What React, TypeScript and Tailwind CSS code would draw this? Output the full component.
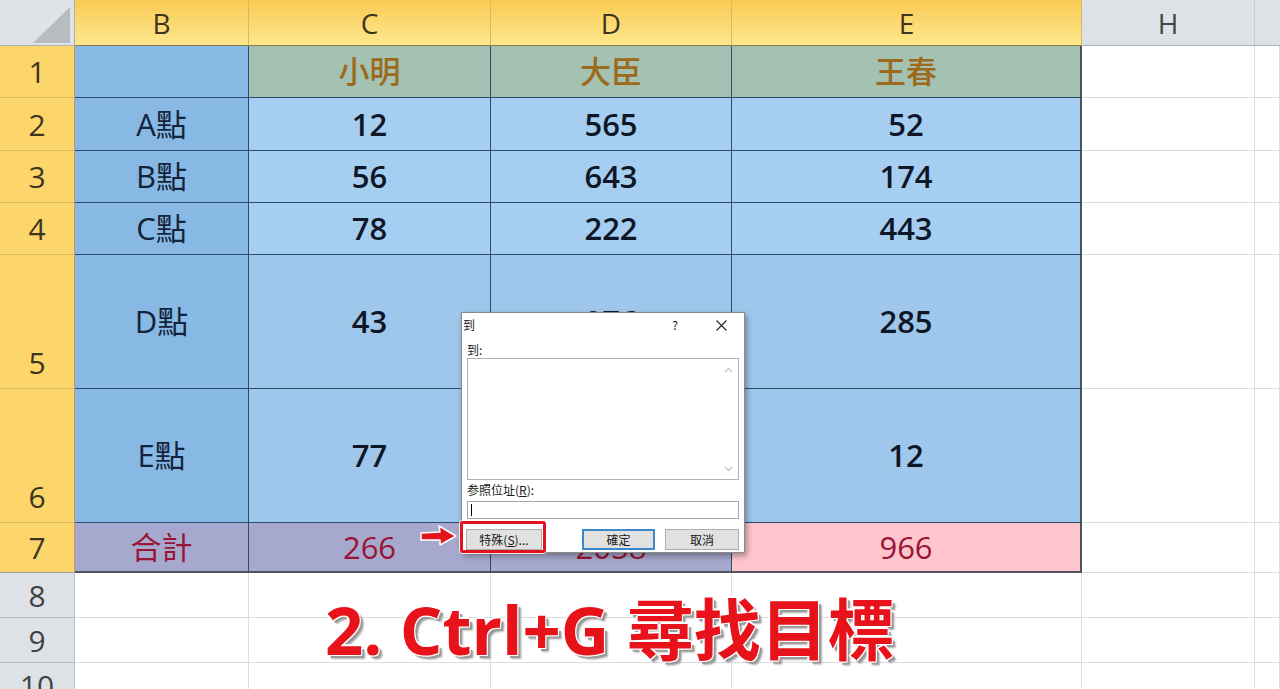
import React from "react";

type Row = { n: string; h: "c" | "b"; cells: string[]; kind: "title" | "light" | "mid" | "total" };

const rows: Row[] = [
  { n: "1", h: "c", cells: ["", "小明", "大臣", "王春"], kind: "title" },
  { n: "2", h: "c", cells: ["A點", "12", "565", "52"], kind: "light" },
  { n: "3", h: "c", cells: ["B點", "56", "643", "174"], kind: "light" },
  { n: "4", h: "c", cells: ["C點", "78", "222", "443"], kind: "light" },
  { n: "5", h: "b", cells: ["D點", "43", "976", "285"], kind: "mid" },
  { n: "6", h: "b", cells: ["E點", "77", "252", "12"], kind: "mid" },
  { n: "7", h: "c", cells: ["合計", "266", "2058", "966"], kind: "total" },
];

function cellClass(kind: Row["kind"], col: number): string {
  const base = "flex items-center justify-center border-b border-r border-[#2b4a6f] text-[31px]";
  let bg = "";
  let color = "text-[#0e1727] font-semibold";
  if (kind === "total") {
    bg = col === 3 ? "bg-[#fec6cc]" : "bg-[#a6a9cd]";
    color = "text-[#9a1436] font-normal";
  } else if (col === 0) {
    bg = "bg-[#87b9e4]";
    color = "text-[#14233a] font-normal";
  } else if (kind === "title") {
    bg = "bg-[#a4c2b1]";
    color = "text-[#9b6a1d] font-medium";
  } else if (kind === "light") {
    bg = "bg-[#a6cef1]";
  } else {
    bg = "bg-[#9fc7eb]";
  }
  let extra = "";
  if (col === 3) extra += " border-r-2 border-r-[#4a545e]";
  if (kind === "total") extra += " border-b-2 border-b-[#50565c]";
  return `${base} ${bg} ${color}${extra}`;
}

const whiteCell = "border-b border-r border-[#dadcde] bg-white";
const grayRowHead =
  "flex items-center justify-center bg-[#dee2e7] border-b border-r border-[#b9bfc6] text-[30px] text-[#3f4245]";

export default function App() {
  return (
    <div className="relative h-[689px] w-[1280px] overflow-hidden bg-white font-['Open_Sans','Noto_Sans_CJK_TC',sans-serif]">
      <div className="grid grid-cols-[75px_174px_242px_241px_350px_173px_1fr] grid-rows-[46px_52px_53px_52px_52px_134px_134px_50px_45px_45px_45px]">
        {/* header row */}
        <div className="relative border-b border-r border-[#a9b0b8] bg-[#dfe3e8]">
          <svg className="absolute left-0 top-0" width="75" height="46" viewBox="0 0 75 46">
            <polygon points="33,43 70,43 70,7" fill="#b7bcc1" />
          </svg>
        </div>
        {["B", "C", "D", "E"].map((c) => (
          <div
            key={c}
            className="flex items-center justify-center border-b border-r border-[#d6b966] border-b-[#8c7a48] bg-linear-to-b from-[#f8cb52] to-[#fee78c] text-[28px] text-[#3d3520]"
          >
            {c}
          </div>
        ))}
        <div className="flex items-center justify-center border-b border-r border-[#c6cbd1] border-b-[#a9b0b8] bg-[#dee2e7] text-[28px] text-[#444749]">
          H
        </div>
        <div className="border-b border-[#a9b0b8] bg-[#dee2e7]" />

        {rows.map((r) => (
          <React.Fragment key={r.n}>
            <div
              className={`flex justify-center border-b border-r border-[#d9b95c] border-r-[#b89e5c] bg-[#fdd66b] text-[30px] text-[#3d3520] ${
                r.h === "b" ? "items-end pb-[3px]" : "items-center"
              } ${r.n === "7" ? "border-b-[#9aa0a6]" : ""}`}
            >
              {r.n}
            </div>
            {r.cells.map((v, i) => (
              <div key={i} className={cellClass(r.kind, i)}>
                {v}
              </div>
            ))}
            <div className={whiteCell} />
            <div className={whiteCell} />
          </React.Fragment>
        ))}

        {["8", "9", "10"].map((n) => (
          <React.Fragment key={n}>
            <div className={grayRowHead}>{n}</div>
            <div className={whiteCell} />
            <div className={whiteCell} />
            <div className={whiteCell} />
            <div className={whiteCell} />
            <div className={whiteCell} />
            <div className={whiteCell} />
          </React.Fragment>
        ))}
      </div>

      {/* Go To dialog */}
      <div className="absolute left-[461px] top-[312px] flex h-[241px] w-[284px] flex-col border border-[#8a8a8a] bg-white text-[12px] text-[#1a1a1a] shadow-[2px_3px_6px_rgba(0,0,0,0.35)] font-['Noto_Sans_CJK_TC','Noto_Sans',sans-serif]">
        <div className="flex h-[24px] items-center pl-[1px]">
          <span className="flex-1 leading-none">到</span>
          <span className="mr-[38px] leading-none">?</span>
          <svg width="11" height="11" viewBox="0 0 11 11" className="mr-[17px]">
            <path d="M0.5 0.5 L10.5 10.5 M10.5 0.5 L0.5 10.5" stroke="#222" strokeWidth="1.1" />
          </svg>
        </div>
        <div className="flex flex-col px-[5px]">
          <div className="mt-[6px] h-[14px] leading-[14px]">到:</div>
          <div className="relative mt-[1px] h-[122px] w-[272px] border border-[#b0b0b0] bg-white">
            <svg className="absolute right-[5px] top-[8px]" width="9" height="6" viewBox="0 0 9 6">
              <path d="M1 5 L4.5 1.5 L8 5" stroke="#c4c4c4" strokeWidth="1.4" fill="none" />
            </svg>
            <svg className="absolute bottom-[7px] right-[5px]" width="9" height="6" viewBox="0 0 9 6">
              <path d="M1 1 L4.5 4.5 L8 1" stroke="#c4c4c4" strokeWidth="1.4" fill="none" />
            </svg>
          </div>
          <div className="mt-[3px] h-[14px] leading-[14px]">
            参照位址(<span className="underline">R</span>):
          </div>
          <div className="mt-[4px] flex h-[18px] w-[272px] items-center border border-[#a8a8a8] bg-white pl-[3px]">
            <div className="h-[12px] w-[1px] bg-black" />
          </div>
          <div className="mt-[10px] flex h-[21px] items-center">
            <div className="ml-[-1px] flex h-[21px] w-[76px] items-center justify-center border border-[#adadad] bg-[#e1e1e1]">
              特殊(<span className="underline">S</span>)...
            </div>
            <div className="ml-[40px] flex h-[21px] w-[73px] items-center justify-center border-2 border-[#3c88c9] bg-[#e1e1e1]">
              確定
            </div>
            <div className="ml-[10px] flex h-[21px] w-[74px] items-center justify-center border border-[#adadad] bg-[#e1e1e1]">
              取消
            </div>
          </div>
        </div>
      </div>

      {/* red highlight around 特殊 */}
      <div className="absolute left-[460px] top-[521px] h-[32px] w-[86px] rounded-[3px] border-[3px] border-[#e0141e] shadow-[0_0_0_1px_rgba(255,255,255,0.8)]" />

      {/* red arrow */}
      <svg className="absolute left-[419px] top-[524px]" width="40" height="24" viewBox="0 0 40 24">
        <path
          d="M2 9 L21 8 L20 2 L37 12 L21 21 L21 16 L2 16 Z"
          fill="#e3141d"
          stroke="#ffffff"
          strokeWidth="1.5"
          strokeLinejoin="round"
        />
      </svg>

      {/* big annotation */}
      <div className="absolute left-[325px] top-[596px] whitespace-nowrap text-[67px] font-bold leading-none text-[#e8121b] [text-shadow:-1px_-1px_0_#fff,1px_-1px_0_#fff,-1px_1px_0_#fff,1px_1px_0_#fff,0_-2px_0_#fff,-2px_0_0_#fff,3px_3px_0_#9a9a9a,4px_4px_2px_#b0b0b0]">
        2. Ctrl+G 尋找目標
      </div>
    </div>
  );
}
